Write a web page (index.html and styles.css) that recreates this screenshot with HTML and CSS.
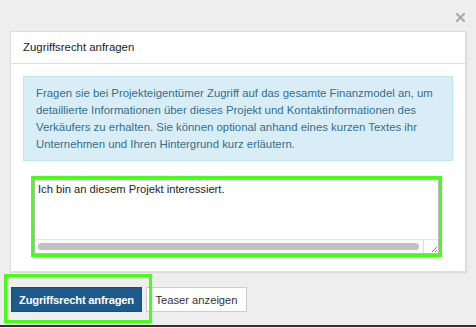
FILE: index.html
```html
<!DOCTYPE html>
<html lang="de">
<head>
    <meta charset="UTF-8" />
    <meta name="viewport" content="width=device-width, initial-scale=1.0" />
    <title>Zugriffsrecht anfragen</title>
    <link rel="stylesheet" href="styles.css">
</head>
<body>
    <!-- Close -->
    <div class="topbar">
        <svg class="close" width="9" height="9" viewBox="0 0 9 9">
            <path d="M1 1 L8 8 M8 1 L1 8" stroke="#a9a9a9" stroke-width="2" stroke-linecap="square" />
        </svg>
    </div>

    <!-- Panel -->
    <div class="panel">
        <div class="panel-head">Zugriffsrecht anfragen</div>
        <div class="panel-body">
            <div class="alert">
                Fragen sie bei Projekteigentümer Zugriff auf das gesamte Finanzmodel an, um<br>
                detaillierte Informationen über dieses Projekt und Kontaktinformationen des<br>
                Verkäufers zu erhalten. Sie können optional anhand eines kurzen Textes ihr<br>
                Unternehmen und Ihren Hintergrund kurz erläutern.
            </div>
            <div class="msg-box">
                <textarea class="msg" name="message">Ich bin an diesem Projekt interessiert.</textarea>
                <div class="hscroll">
                    <div class="thumb"></div>
                    <div class="grip">
                        <svg width="8" height="8" viewBox="0 0 8 8">
                            <path d="M7 2 L2 7 M7 5 L5 7" stroke="#777" stroke-width="1" />
                        </svg>
                    </div>
                </div>
            </div>
        </div>
    </div>

    <!-- Buttons -->
    <div class="actions">
        <button type="submit" class="btn btn-primary">Zugriffsrecht anfragen</button>
        <button type="button" class="btn btn-default">Teaser anzeigen</button>
        <div class="highlight"></div>
    </div>
    <div class="bottom-bar"></div>
</body>
</html>
```

FILE: styles.css
```css
body {
    font-family: "Liberation Sans", Arial, sans-serif;
    font-size: 12px;
    margin: 0;
    padding: 0;
    background-color: #eeeeee;
    height: 328px;
    display: flex;
    flex-direction: column;
    overflow: hidden;
}
.topbar {
    height: 31px;
    display: flex;
    justify-content: flex-end;
    align-items: flex-start;
    padding: 13px 11px 0 0;
    box-sizing: border-box;
}
.close {
    display: block;
}
.panel {
    margin: 0 10px;
    background: #ffffff;
    border: 1px solid #dddddd;
    box-shadow: 1px 1px 1px rgba(0, 0, 0, 0.08);
}
.panel-head {
    height: 31px;
    line-height: 31px;
    padding: 0 12px;
    border-bottom: 1px solid #dddddd;
    font-size: 11.4px;
    color: #222;
}
.panel-body {
    padding: 12px 12px 17px 12px;
}
.alert {
    background: #d9edf7;
    border: 1px solid #bce8f1;
    color: #31708f;
    padding: 8px 6px 7px 12px;
    line-height: 17px;
    font-size: 11.4px;
    white-space: nowrap;
}
.msg-box {
    margin: 18px 0 0 11px;
    width: 405px;
    height: 75px;
    box-sizing: border-box;
    border: 1px solid #b8b8b8;
    outline: 3px solid #45ff14;
    display: flex;
    flex-direction: column;
}
.msg {
    display: block;
    flex: 1;
    width: 100%;
    box-sizing: border-box;
    border: none;
    padding: 2px 3px;
    margin: 0;
    font-family: "Liberation Sans", Arial, sans-serif;
    font-size: 11.2px;
    line-height: 15px;
    color: #222;
    resize: none;
    overflow: hidden;
    outline: none;
}
.hscroll {
    height: 13px;
    display: flex;
    border-top: 1px solid #e6e6e6;
    background: #fafafa;
}
.thumb {
    flex: 1;
    height: 7px;
    margin: 3px 4px 0 3px;
    background: #c1c1c1;
    border-radius: 4px;
}
.grip {
    width: 14px;
    border-left: 1px solid #dcdcdc;
    background: #ffffff;
    display: flex;
    align-items: flex-end;
    justify-content: flex-end;
}
.grip svg {
    display: block;
}
.actions {
    position: relative;
    height: 53px;
    display: flex;
    align-items: flex-start;
    gap: 4px;
    padding: 15px 0 0 11px;
    box-sizing: border-box;
}
.btn {
    height: 25px;
    margin: 0;
    font-family: "Liberation Sans", Arial, sans-serif;
    font-size: 11.2px;
    cursor: pointer;
    border-radius: 0;
}
.btn-primary {
    width: 131px;
    background: #1c5a8c;
    border: 1px solid #164d7a;
    color: #ffffff;
    font-weight: bold;
    letter-spacing: -0.2px;
}
.btn-default {
    width: 101px;
    background: #ffffff;
    border: 1px solid #cccccc;
    color: #333;
}
.highlight {
    position: absolute;
    left: 4px;
    top: 2px;
    width: 148px;
    height: 49px;
    box-sizing: border-box;
    border: 3px solid #45ff14;
    pointer-events: none;
}
.bottom-bar {
    height: 2px;
    background: #333333;
}
```
